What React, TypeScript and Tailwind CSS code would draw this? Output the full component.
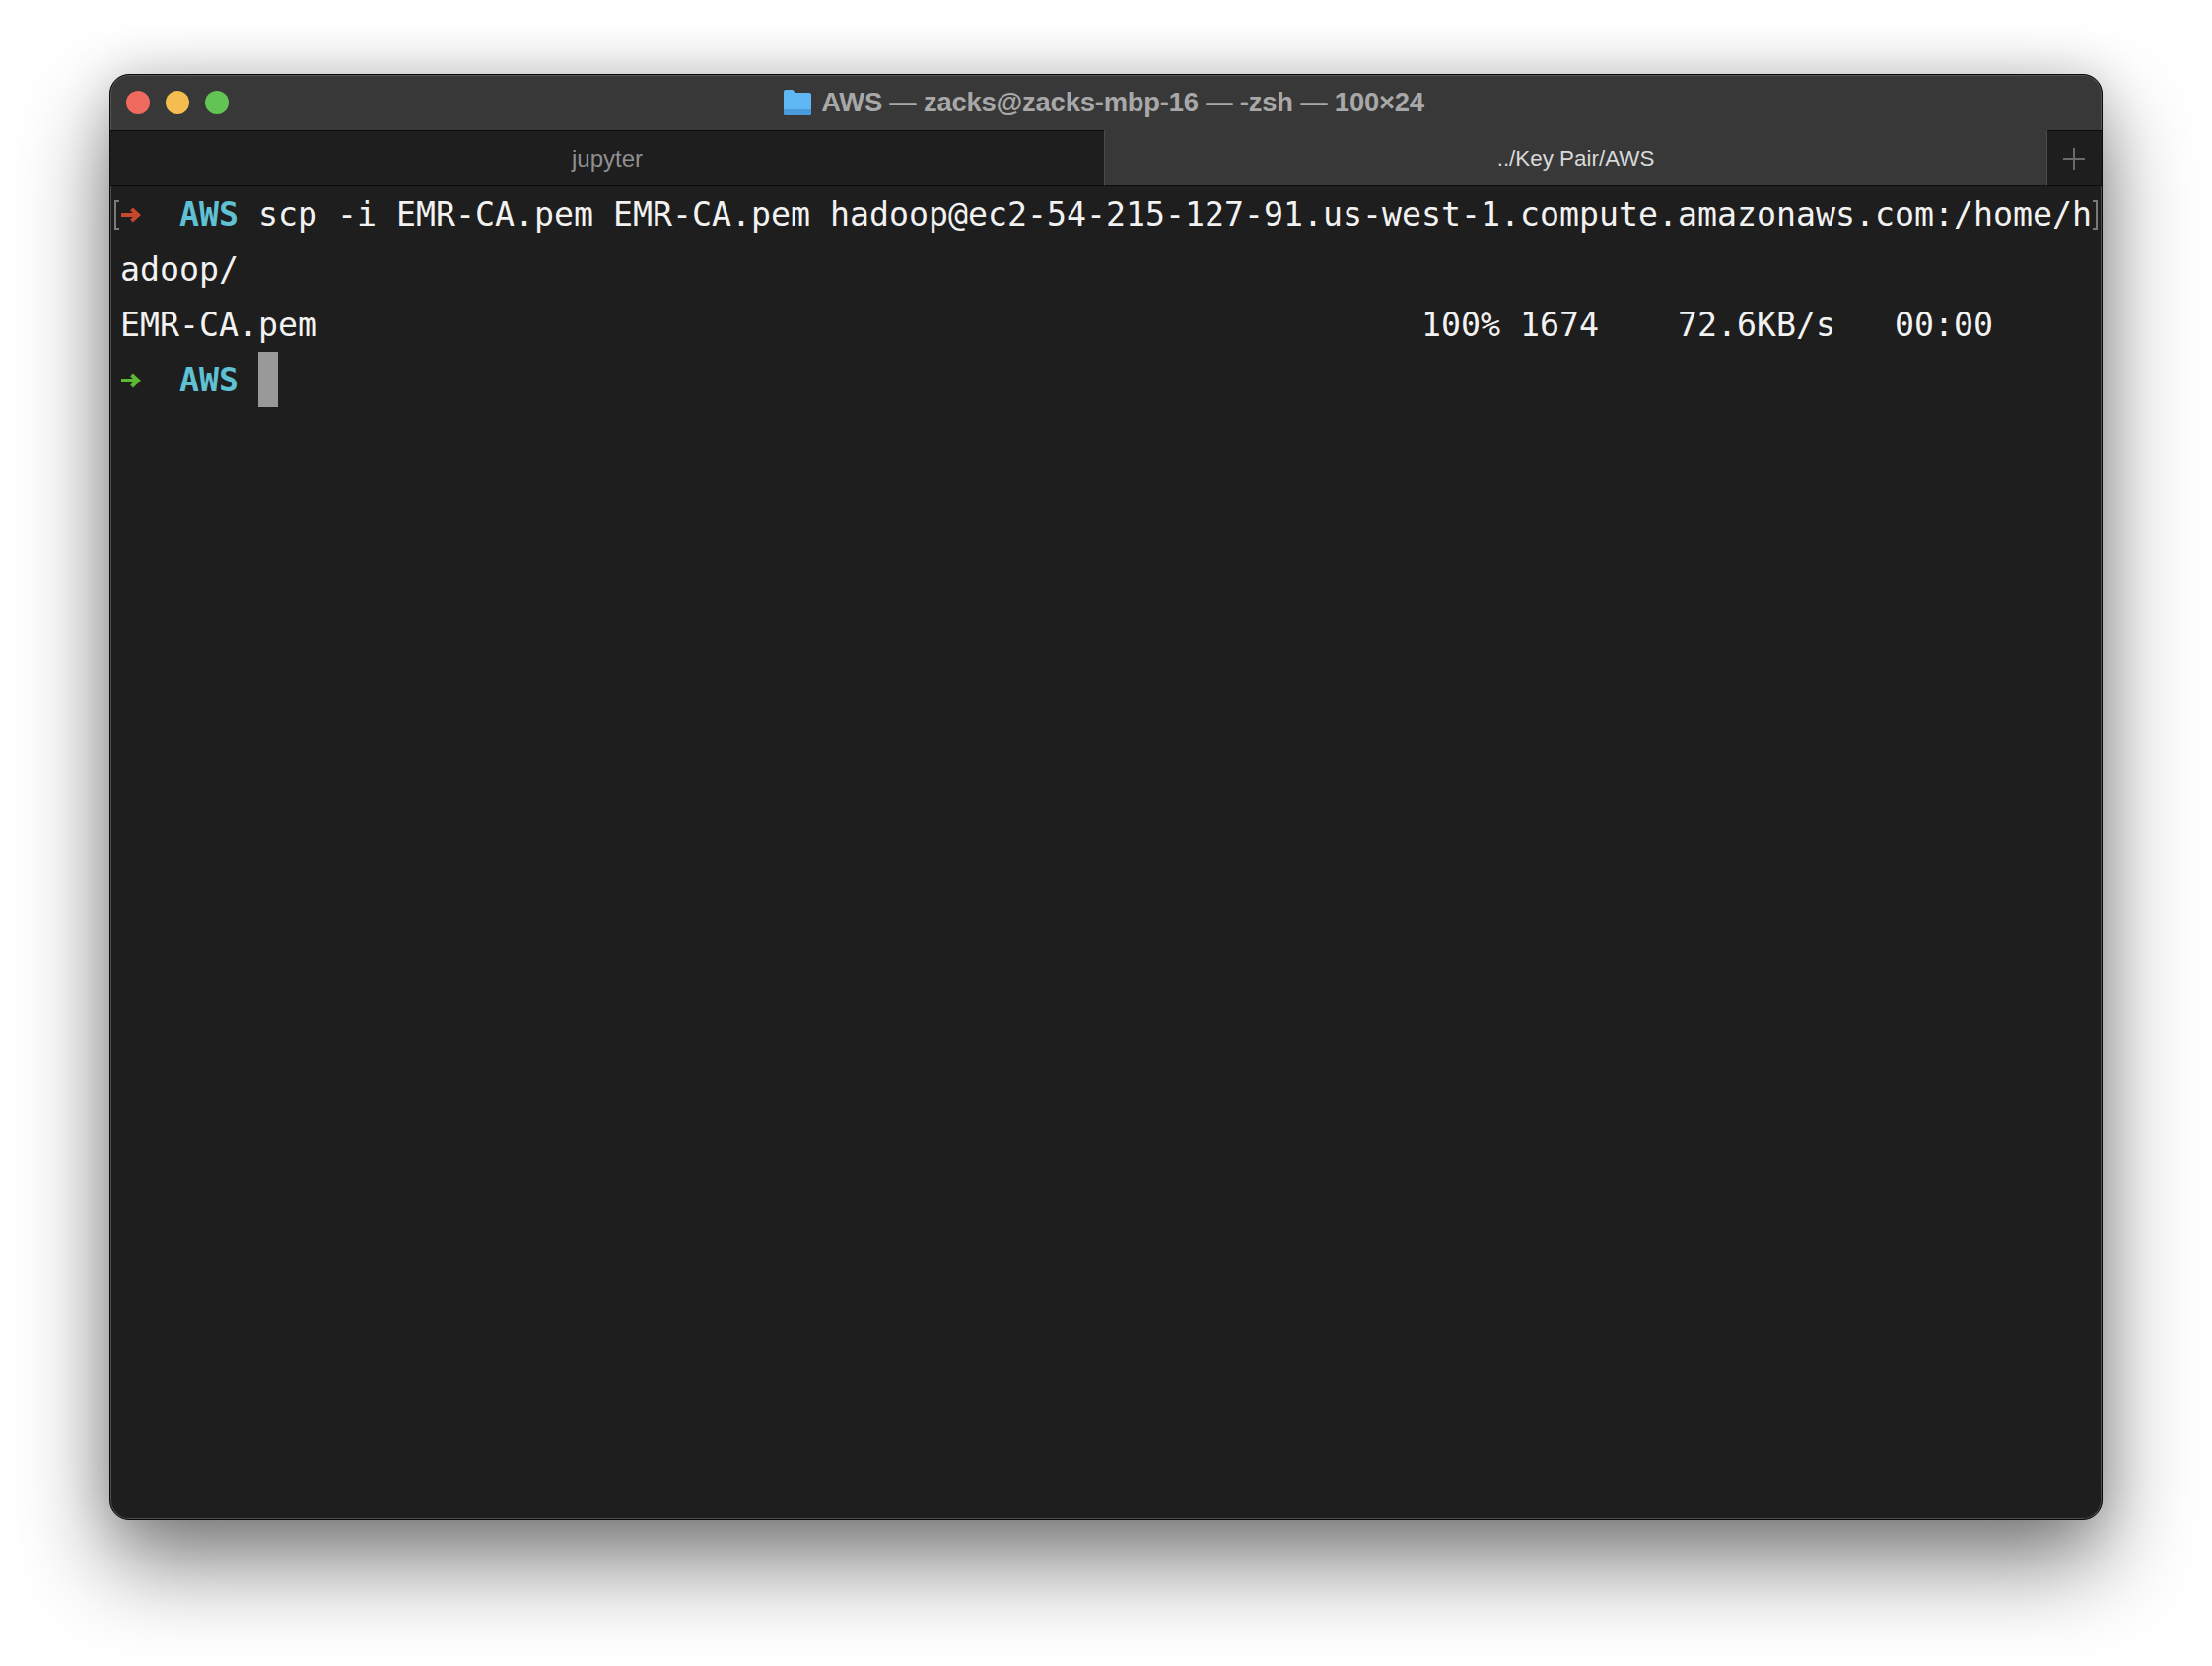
const mono = "font-['DejaVu_Sans_Mono','Liberation_Mono',monospace]";

function Arrow({ color }: { color: string }) {
  return (
    <svg width="21" height="16" viewBox="0 0 21 16" fill="none" className="absolute left-0 top-[20px]">
      <path d="M1 8h17M11.5 2l6.5 6-6.5 6" stroke={color} strokeWidth="4" />
    </svg>
  );
}

function Prompt({ color }: { color: string }) {
  return (
    <>
      <Arrow color={color} />
      <span className="whitespace-pre">{"   "}</span>
      <span className="font-bold text-[#5fc1d3]">AWS</span>
      <span className="whitespace-pre"> </span>
    </>
  );
}

export default function App() {
  return (
    <div className="h-[1690px] w-[2244px] overflow-hidden bg-white pl-[111px] pt-[75px]">
      <div className="flex h-[1467px] w-[2022px] flex-col overflow-hidden rounded-[20px] border border-[#0a0a0a] bg-[#1e1e1e] shadow-[0_44px_90px_rgba(0,0,0,0.5),0_0_50px_rgba(0,0,0,0.16)]">
        <div className="relative flex h-[56px] shrink-0 items-center justify-center rounded-t-[19px] border-l border-r border-t border-[#565656] bg-[#383838] pb-[2px] pr-[4px]">
          <div className="absolute left-[15px] top-[15px] flex gap-[16px]">
            <div className="h-[24px] w-[24px] rounded-full bg-[#ee6a5f]" />
            <div className="h-[24px] w-[24px] rounded-full bg-[#f5bd4f]" />
            <div className="h-[24px] w-[24px] rounded-full bg-[#61c454]" />
          </div>
          <div className="flex items-center gap-[10px] font-['Liberation_Sans',sans-serif] text-[27.4px] font-bold tracking-[-0.2px] text-[#a8a8a8]">
            <svg width="28" height="27" viewBox="0 0 28 27">
              <path d="M0 3a2 2 0 0 1 2-2h7l3 3h14a2 2 0 0 1 2 2v19a2 2 0 0 1-2 2H2a2 2 0 0 1-2-2z" fill="#5fb8f3" />
              <path d="M0 21h28v4a2 2 0 0 1-2 2H2a2 2 0 0 1-2-2z" fill="#4a9bdc" />
            </svg>
            AWS — zacks@zacks-mbp-16 — -zsh — 100×24
          </div>
        </div>

        <div className="flex h-[57px] shrink-0 font-['Liberation_Sans',sans-serif]">
          <div className="flex w-[1008px] items-center justify-center border-y border-[#0c0c0c] bg-[#1e1e1e] text-[24px] text-[#8f8f8f]">jupyter</div>
          <div className="flex w-[957px] items-center justify-center border-b border-l border-r border-[#4a4a4a] border-b-[#0c0c0c] bg-[#383838] pt-[1px] text-[22.4px] text-[#d8d8d8]">../Key Pair/AWS</div>
          <div className="flex flex-1 items-center justify-center border-y border-[#0c0c0c] bg-[#1e1e1e] pr-[2px]">
            <svg width="22" height="22" viewBox="0 0 22 22">
              <path d="M11 0v22M0 11h22" stroke="#6a6a6a" strokeWidth="2" />
            </svg>
          </div>
        </div>

        <div className={`relative flex-1 rounded-b-[19px] border-x border-b border-[#4e4e4e] pl-[9px] pt-[1px] text-[33.23px] leading-[56px] text-[#f2f2f2] ${mono}`}>
          <div className="relative whitespace-pre">
            <span className="absolute left-[-6px] top-[13px] h-[30px] w-[5px] border-y-2 border-l-2 border-[#7a7a7a]" />
            <Prompt color="#c9472f" />
            scp -i EMR-CA.pem EMR-CA.pem hadoop@ec2-54-215-127-91.us-west-1.compute.amazonaws.com:/home/h
            <span className="absolute left-[2001px] top-[13px] h-[30px] w-[5px] border-y-2 border-r-2 border-[#7a7a7a]" />
          </div>
          <div className="whitespace-pre">adoop/</div>
          <div className="whitespace-pre">{"EMR-CA.pem                                                        100% 1674    72.6KB/s   00:00"}</div>
          <div className="relative flex whitespace-pre">
            <Prompt color="#5fb832" />
            <span className="mt-[-1px] inline-block h-[56px] w-[20px] bg-[#999999]" />
          </div>
        </div>
      </div>
    </div>
  );
}
